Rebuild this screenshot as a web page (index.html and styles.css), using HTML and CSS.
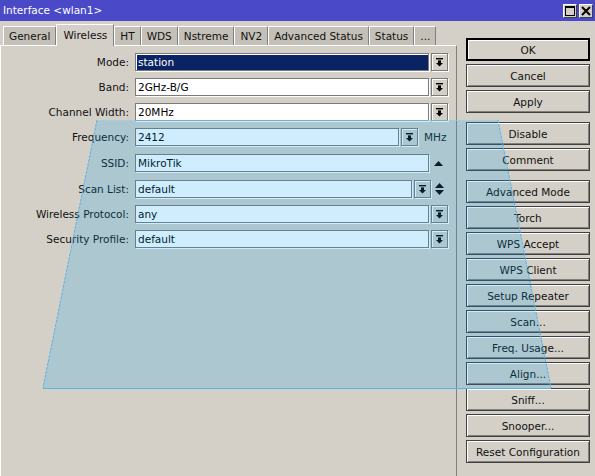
FILE: index.html
```html
<!DOCTYPE html>
<html>
<head>
<meta charset="utf-8">
<link rel="stylesheet" href="styles.css">
</head>
<body>
<div class="window">
  <div class="titlebar">
    <span class="title">Interface &lt;wlan1&gt;</span>
    <div class="tb-btns">
      <span class="tb-btn"><svg width="10" height="10" viewBox="0 0 10 10"><rect x="0.5" y="0.5" width="9" height="9" fill="none" stroke="#000" stroke-width="1"/><rect x="0" y="0" width="10" height="2" fill="#000"/></svg></span>
      <span class="tb-btn"><svg width="10" height="10" viewBox="0 0 10 10"><path d="M1 1 L9 9 M9 1 L1 9" stroke="#000" stroke-width="2"/></svg></span>
    </div>
  </div>
  <div class="main">
    <div class="left">
      <div class="tabs">
        <span class="tab">General</span>
        <span class="tab active">Wireless</span>
        <span class="tab">HT</span>
        <span class="tab">WDS</span>
        <span class="tab">Nstreme</span>
        <span class="tab">NV2</span>
        <span class="tab">Advanced Status</span>
        <span class="tab">Status</span>
        <span class="tab">...</span>
      </div>
      <div class="panel">
        <div class="form">
          <div class="row">
            <label class="lbl">Mode:</label>
            <div class="field selected"><span>station</span></div>
            <span class="dd"><svg width="7" height="9" viewBox="0 0 7 9"><rect x="0" y="0" width="7" height="1.4"/><rect x="2" y="2.4" width="3" height="2.6"/><polygon points="0,5 7,5 3.5,8.6"/></svg></span>
          </div>
          <div class="row">
            <label class="lbl">Band:</label>
            <div class="field"><span>2GHz-B/G</span></div>
            <span class="dd"><svg width="7" height="9" viewBox="0 0 7 9"><rect x="0" y="0" width="7" height="1.4"/><rect x="2" y="2.4" width="3" height="2.6"/><polygon points="0,5 7,5 3.5,8.6"/></svg></span>
          </div>
          <div class="row">
            <label class="lbl">Channel Width:</label>
            <div class="field"><span>20MHz</span></div>
            <span class="dd"><svg width="7" height="9" viewBox="0 0 7 9"><rect x="0" y="0" width="7" height="1.4"/><rect x="2" y="2.4" width="3" height="2.6"/><polygon points="0,5 7,5 3.5,8.6"/></svg></span>
          </div>
          <div class="row">
            <label class="lbl">Frequency:</label>
            <div class="field freq"><span>2412</span></div>
            <span class="dd"><svg width="7" height="9" viewBox="0 0 7 9"><rect x="0" y="0" width="7" height="1.4"/><rect x="2" y="2.4" width="3" height="2.6"/><polygon points="0,5 7,5 3.5,8.6"/></svg></span>
            <span class="unit">MHz</span>
          </div>
          <div class="row sp">
            <label class="lbl">SSID:</label>
            <div class="field"><span>MikroTik</span></div>
            <span class="arrow"><svg width="9" height="5" viewBox="0 0 9 5"><polygon points="0,5 9,5 4.5,0"/></svg></span>
          </div>
          <div class="row sp">
            <label class="lbl">Scan List:</label>
            <div class="field scan"><span>default</span></div>
            <span class="dd"><svg width="7" height="9" viewBox="0 0 7 9"><rect x="0" y="0" width="7" height="1.4"/><rect x="2" y="2.4" width="3" height="2.6"/><polygon points="0,5 7,5 3.5,8.6"/></svg></span>
            <span class="arrow updown"><svg width="9" height="12" viewBox="0 0 9 12"><polygon points="0,5 9,5 4.5,0"/><polygon points="0,7 9,7 4.5,12"/></svg></span>
          </div>
          <div class="row">
            <label class="lbl">Wireless Protocol:</label>
            <div class="field"><span>any</span></div>
            <span class="dd"><svg width="7" height="9" viewBox="0 0 7 9"><rect x="0" y="0" width="7" height="1.4"/><rect x="2" y="2.4" width="3" height="2.6"/><polygon points="0,5 7,5 3.5,8.6"/></svg></span>
          </div>
          <div class="row">
            <label class="lbl">Security Profile:</label>
            <div class="field"><span>default</span></div>
            <span class="dd"><svg width="7" height="9" viewBox="0 0 7 9"><rect x="0" y="0" width="7" height="1.4"/><rect x="2" y="2.4" width="3" height="2.6"/><polygon points="0,5 7,5 3.5,8.6"/></svg></span>
          </div>
        </div>
      </div>
    </div>
    <div class="buttons">
      <div class="group">
        <button class="btn default">OK</button>
        <button class="btn">Cancel</button>
        <button class="btn">Apply</button>
      </div>
      <div class="group">
        <button class="btn">Disable</button>
        <button class="btn">Comment</button>
      </div>
      <div class="group">
        <button class="btn">Advanced Mode</button>
        <button class="btn">Torch</button>
        <button class="btn">WPS Accept</button>
        <button class="btn">WPS Client</button>
        <button class="btn">Setup Repeater</button>
        <button class="btn">Scan...</button>
        <button class="btn">Freq. Usage...</button>
        <button class="btn">Align...</button>
        <button class="btn">Sniff...</button>
        <button class="btn">Snooper...</button>
        <button class="btn">Reset Configuration</button>
      </div>
    </div>
  </div>
  <svg class="overlay" width="595" height="476" viewBox="0 0 595 476">
    <polygon points="97,120 498,120 551,388 43,388" fill="rgba(0,160,240,0.19)"/>
    <line x1="97" y1="120.5" x2="498" y2="120.5" stroke="rgba(150,215,240,0.5)" stroke-width="1"/>
    <line x1="97" y1="120" x2="43" y2="388" stroke="#5ab4e8" stroke-width="1" stroke-dasharray="3 1"/>
    <line x1="498" y1="120" x2="551" y2="388" stroke="#5ab4e8" stroke-width="1" stroke-dasharray="3 1"/>
    <line x1="43" y1="388.5" x2="551" y2="388.5" stroke="#5ab4e8" stroke-width="1"/>
  </svg>
</div>
</body>
</html>
```
FILE: styles.css
```css
html, body {
  margin: 0;
  padding: 0;
}
body {
  width: 595px;
  height: 476px;
  overflow: hidden;
  background: #d4d0c8;
  font-family: "DejaVu Sans", Verdana, sans-serif;
  font-size: 10.5px;
  color: #111;
}
.window {
  position: relative;
  width: 595px;
  height: 476px;
  display: flex;
  flex-direction: column;
  background: #d4d0c8;
}
.titlebar {
  height: 21px;
  flex: none;
  background: #4a4ac8;
  display: flex;
  align-items: center;
  justify-content: space-between;
  padding: 0 2px 0 3px;
}
.title {
  color: #fff;
  margin-top: -1px;
}
.tb-btns {
  display: flex;
  gap: 2px;
}
.tb-btn {
  width: 14px;
  height: 14px;
  box-sizing: border-box;
  background: #d4d0c8;
  border: 1px solid #404040;
  border-top-color: #fff;
  border-left-color: #fff;
  display: flex;
  align-items: center;
  justify-content: center;
}
.main {
  flex: 1;
  display: flex;
}
.left {
  width: 457px;
  display: flex;
  flex-direction: column;
}
.tabs {
  height: 24px;
  display: flex;
  align-items: flex-end;
  padding-left: 3px;
  white-space: nowrap;
}
.tab {
  height: 19px;
  box-sizing: border-box;
  padding: 3px 5px 0 5px;
  background: #c4c0b8;
  border-left: 1px solid #fff;
  border-right: 1px solid #808080;
  border-top: 1px solid #fff;
}
.tab.active {
  height: 22px;
  background: #d4d0c8;
  padding: 4px 6px 0 6px;
  position: relative;
  top: 1px;
}
.panel {
  flex: 1;
  border-top: 1px solid #fff;
  border-right: 1px solid #808080;
  border-left: 1px solid #fff;
}
.form {
  padding-top: 7px;
  display: flex;
  flex-direction: column;
  gap: 7px;
}
.row {
  height: 18px;
  display: flex;
  align-items: center;
}
.row.sp {
  margin-top: 1px;
}
.lbl {
  width: 128px;
  text-align: right;
  flex: none;
}
.field {
  margin-left: 6px;
  width: 294px;
  height: 18px;
  box-sizing: border-box;
  background: #fff;
  border: 1px solid #7a7a7a;
  box-shadow: 1px 1px 0 #fff;
  display: flex;
  align-items: center;
  padding-left: 2px;
  color: #000;
}
.field.selected {
  background: #0a2463;
  color: #fff;
  box-shadow: inset 1px 1px 0 #fff, 1px 1px 0 #fff;
}
.field.freq {
  width: 264px;
}
.field.scan {
  width: 277px;
}
.dd {
  margin-left: 2px;
  width: 17px;
  height: 18px;
  box-sizing: border-box;
  background: #d4d0c8;
  border: 1px solid #7a7a7a;
  box-shadow: inset 1px 1px 0 #fff, 1px 1px 0 #fff;
  display: flex;
  align-items: center;
  justify-content: center;
  fill: #000;
}
.unit {
  margin-left: 6px;
  color: #1a1a1a;
}
.arrow {
  margin-left: 5px;
  display: flex;
  align-items: center;
  fill: #000;
}
.row .arrow.updown {
  margin-left: 4px;
}
.buttons {
  padding-top: 17px;
  padding-left: 9px;
  display: flex;
  flex-direction: column;
  gap: 9px;
}
.group {
  display: flex;
  flex-direction: column;
  gap: 3px;
}
.btn {
  width: 124px;
  height: 23px;
  box-sizing: border-box;
  margin: 0;
  padding: 1px 0 0 0;
  font-family: "DejaVu Sans", Verdana, sans-serif;
  font-size: 10.5px;
  color: #111;
  background: #d4d0c8;
  border: 1px solid #404040;
  box-shadow: inset 1px 1px 0 #fff, inset -1px -1px 0 #808080;
}
.btn.default {
  border: 1px solid #000;
  box-shadow: inset 0 0 0 1px #000, inset 2px 2px 0 #fff;
}
.overlay {
  position: absolute;
  left: 0;
  top: 0;
  pointer-events: none;
}
```
